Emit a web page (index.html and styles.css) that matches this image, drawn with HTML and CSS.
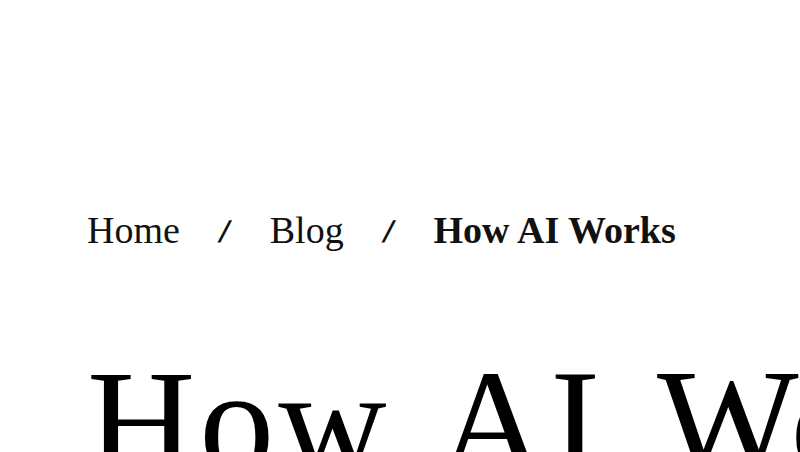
FILE: index.html
```html
<!DOCTYPE html>
<html lang="en">
<head>
<meta charset="utf-8">
<title>How AI Works</title>
<link rel="stylesheet" href="styles.css">
</head>
<body>
<main class="page">
  <nav class="crumbs" aria-label="Breadcrumb">
    <a class="crumb" href="#">Home</a>
    <span class="sep">/</span>
    <a class="crumb" href="#">Blog</a>
    <span class="sep">/</span>
    <span class="crumb current">How AI Works</span>
  </nav>
  <h1 class="title">How AI Works</h1>
</main>
</body>
</html>
```
FILE: styles.css
```css
html, body {
  margin: 0;
  padding: 0;
  background: #ffffff;
  overflow: hidden;
}
.page {
  width: 800px;
  height: 452px;
  overflow: hidden;
  padding: 200px 0 0 87px;
  box-sizing: border-box;
  font-family: "Liberation Serif", "DejaVu Serif", serif;
  color: #111111;
}
.crumbs {
  display: flex;
  align-items: baseline;
  gap: 40px;
  height: 60px;
  font-size: 38px;
  line-height: 60px;
}
.crumb {
  color: #111111;
  text-decoration: none;
}
.current {
  font-weight: bold;
}
.sep {
  display: inline-block;
  font-family: "DejaVu Sans", sans-serif;
  font-weight: bold;
  font-size: 27px;
  line-height: 1;
  transform: translateY(-3px) skewX(-12deg);
}
.title {
  margin: 87px 0 0 0;
  font-size: 150px;
  font-weight: normal;
  line-height: 1;
  white-space: nowrap;
  letter-spacing: 4px;
  word-spacing: 14px;
  color: #000000;
}
```
